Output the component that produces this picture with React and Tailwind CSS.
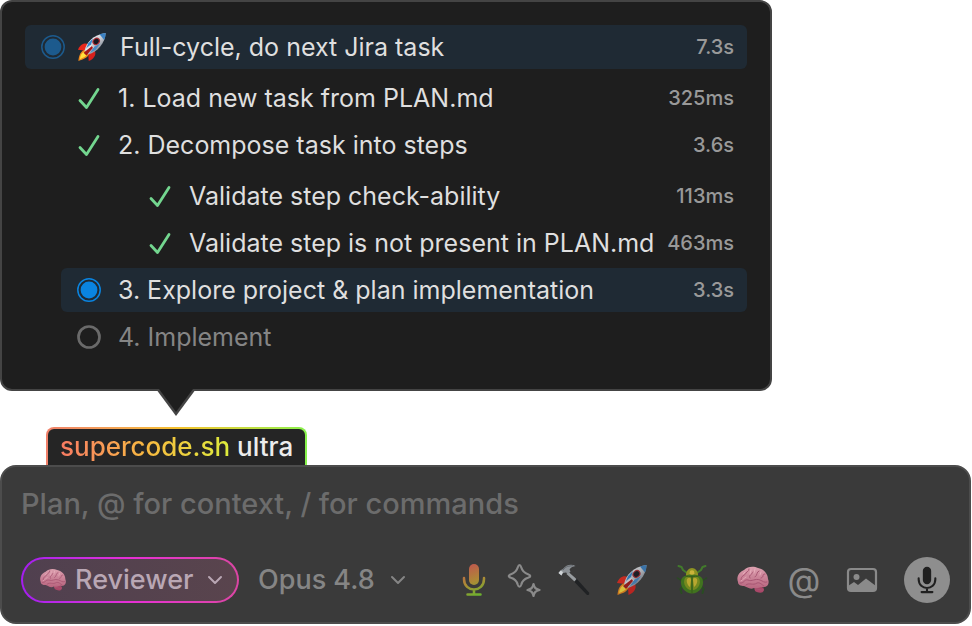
import { useId } from 'react';

function Rocket({ className }) {
  const id = useId();
  return (
    <svg viewBox="0 0 32 32" className={className} aria-hidden="true">
      <defs>
        <linearGradient id={id} x1="0.25" y1="0.2" x2="0.75" y2="0.8">
          <stop offset="0" stopColor="#f4f7fa" />
          <stop offset="0.5" stopColor="#c4c9d0" />
          <stop offset="1" stopColor="#7c828d" />
        </linearGradient>
      </defs>
      <path d="M12 13 C7 11 3 14 1 19 L9 20 Z" fill="#e8281c" />
      <path d="M19 20 C21 24 18 29 12.500 31 L12 23 Z" fill="#d8201c" />
      <path d="M9 19 C4 20 2 25 1.500 31 C7 29 11 28 13 23 Z" fill="#f08a1c" />
      <path d="M8.500 20.500 C5 22 3.500 25 3 29 C7 27.500 9.500 26.500 11.500 23 Z" fill="#ffe23c" />
      <path d="M8 20 C10 11 17 3 30.500 1 C30 12 22 21 12 24 Z" fill={`url(#${id})`} />
      <path d="M24 2.500 C26 1.700 28.500 1.200 30.500 1 C30.500 4 30 6 29 8.500 Z" fill="#3b82c4" />
      <path d="M12 12 L17 7 L15 13 L10 17 Z" fill="#2f86cf" />
      <path d="M18 16 L25 12 L20 19 L14 22 Z" fill="#4a8ac6" />
      <path d="M9 19 L15 14 L18 16 L12 23 Z" fill="#e9eef3" />
      <path d="M7 22 L16 15 L17 17 L10 25 Z" fill="#a61818" />
      <ellipse cx="20.500" cy="10" rx="4.300" ry="3.600" transform="rotate(-40 20.500 10)" fill="#a52d36" />
      <ellipse cx="20.500" cy="10" rx="3" ry="2.500" transform="rotate(-40 20.500 10)" fill="#171923" />
    </svg>
  );
}

function Brain({ className }) {
  const id = useId();
  return (
    <svg viewBox="0 0 34 30" className={className} aria-hidden="true">
      <defs>
        <linearGradient id={id} x1="0" y1="0" x2="0" y2="1">
          <stop offset="0" stopColor="#dca0af" />
          <stop offset="1" stopColor="#b8657f" />
        </linearGradient>
      </defs>
      <path d="M18 21 C22 20 28 21 28 25 C27 29 22 28 19 26 Z" fill="#a94768" />
      <path
        d="M2 17 C0 12 3 7 8 5 C12 1 18 1 22 3 C28 4 32 9 32 14 C34 19 31 23 26 22 C23 22 22 24 18 23 C14 25 11 22 8 21 C5 21 2 20 2 17 Z"
        fill={`url(#${id})`}
      />
      <g fill="none" stroke="#a85673" strokeWidth="1" strokeLinecap="round">
        <path d="M5 15 C5 10 9 11 10 8 C11 6 13 7 13 4" />
        <path d="M4 18 C8 19 8 14 12 15 C16 17 19 13 24 15 C27 16 28 18 31 17" />
        <path d="M10 20 C13 17 17 21 21 18 C24 17 26 20 28 21" />
        <path d="M14 13 C12 10 16 10 17 7 M19 12 C22 10 20 7 23 6 M25 13 C29 12 25 9 29 9" />
        <path d="M19 24 C22 23 24 26 27 25" />
      </g>
      <g fill="none" stroke="#f0b5c3" strokeWidth="1" strokeLinecap="round" opacity="0.7">
        <path d="M7 9 L9 7 M14 9 L15 5 M18 8 L19 4 M24 10 L25 7 M5 16 C7 16 7 13 10 12" />
      </g>
    </svg>
  );
}

function Beetle({ className }) {
  return (
    <svg viewBox="0 0 32 32" className={className} aria-hidden="true">
      <g fill="none" strokeLinecap="round" strokeLinejoin="round">
        <path d="M11 9 L7 6 L5.500 3 L2.500 2 M21 9 L25 6 L26.500 3 L29.500 2" stroke="#427a2c" strokeWidth="2" />
        <path d="M8 15 L4.500 16 L1.500 14 M24 15 L27.500 16 L30.500 14" stroke="#294d22" strokeWidth="1.500" />
        <path d="M7 22 L4.500 25 L5.500 29 M25 22 L27.500 25 L26.500 29" stroke="#294d22" strokeWidth="2" />
      </g>
      <path d="M10 12 C9.500 7 13 4 16 4 C19 4 22.500 7 22 12 Z" fill="#8f9322" />
      <path d="M5.500 15 C8 9 24 9 26.500 15 C29 22 23 29.500 16 29.500 C9 29.500 3 22 5.500 15 Z" fill="#41731f" />
      <path d="M9 14 C12 11.500 15 12 15.500 14 L15 26 C11 26 6 20 9 14 Z" fill="#75891f" />
      <path d="M23 14 C20 11.500 17 12 16.500 14 L17 26 C21 26 26 20 23 14 Z" fill="#75891f" />
      <path d="M11 15 C13 13 15 13.500 15 16 L14 23 C12 22 10 18 11 15 Z M21 15 C19 13 17 13.500 17 16 L18 23 C20 22 22 18 21 15 Z" fill="#b8a730" />
      <path d="M14 7 C15 6 17 6 18 7 L18.500 10 C17 11 15 11 13.500 10 Z" fill="#cbb43a" />
      <path d="M16 12 V29 M9.500 12 C13 13 19 13 22.500 12" fill="none" stroke="#385b1b" strokeWidth="1" />
    </svg>
  );
}

function Hammer({ className }) {
  return (
    <svg viewBox="0 0 34 34" className={className} aria-hidden="true">
      <path d="M16.500 15 L19 15 L32 29.500 C33 31.500 31 33 29.500 31.500 L17.500 19 Z" fill="#202224" />
      <path d="M11 8.500 L19.500 16 L17.500 18.500 L9.500 11 Z" fill="#999da0" />
      <path d="M1.500 10 L4.500 12.500 L6 10 L9 9.500 L11 11 L13.500 8.500 L12.500 6.500 C14 4 16 3.500 18.500 3 C14 0.500 9 2 6 6 L4 7 Z" fill="#8b9095" />
      <path d="M1.500 10 L4.500 12.500 L6 9 L3.500 7.500 Z" fill="#d0d4d7" />
      <path d="M6 7 C9 3 12 3 16 2.700" stroke="#62676d" fill="none" />
    </svg>
  );
}

function Mic({ className, gradient }) {
  const id = useId();
  const paint = gradient ? `url(#${id})` : 'currentColor';
  return (
    <svg viewBox="0 0 24 36" className={className} aria-hidden="true">
      <defs>
        <linearGradient id={id} gradientUnits="userSpaceOnUse" x1="6" y1="4" x2="18" y2="34">
          <stop offset="0" stopColor="#bd5a4c" />
          <stop offset="0.5" stopColor="#ad8936" />
          <stop offset="1" stopColor="#68b52e" />
        </linearGradient>
      </defs>
      <rect x="7" y="2" width="10" height="21" rx="5" fill={paint} />
      <path
        d="M2 16 V17 C2 31 22 31 22 17 V16 M12 28 V32.500 M5.500 32.500 H18.500"
        fill="none"
        stroke={paint}
        strokeWidth="2.500"
        strokeLinecap="round"
      />
    </svg>
  );
}

function Sparkles({ className }) {
  return (
    <svg viewBox="0 0 34 34" className={className} fill="none" stroke="currentColor" strokeWidth="2.200" strokeLinejoin="round" aria-hidden="true">
      <path d="M12.500 2 C13.300 2 13.800 3 14.300 4.500 C15.500 8.500 17 10 21 11.200 C24 12.200 24 13.800 21 14.800 C17 16 15.500 17.500 14.300 21.500 C13.300 24.500 11.700 24.500 10.700 21.500 C9.500 17.500 8 16 4 14.800 C1 13.800 1 12.200 4 11.200 C8 10 9.500 8.500 10.700 4.500 C11.200 3 11.700 2 12.500 2 Z" />
      <path d="M26.500 21 C27.500 25 28.500 26 32.500 27 C28.500 28 27.500 29 26.500 33 C25.500 29 24.500 28 20.500 27 C24.500 26 25.500 25 26.500 21 Z" />
    </svg>
  );
}

function Picture({ className }) {
  return (
    <svg viewBox="0 0 32 26" className={className} aria-hidden="true">
      <rect x="2" y="2" width="28" height="22" rx="3" fill="none" stroke="currentColor" strokeWidth="2.200" />
      <circle cx="10.500" cy="10" r="3" fill="currentColor" />
      <path d="M2 19 L8 15 L12 18 L20 11.500 L30 19 V22 Q30 24 28 24 H4 Q2 24 2 22 Z" fill="currentColor" />
    </svg>
  );
}

function Chevron({ className }) {
  return (
    <svg viewBox="0 0 16 10" className={className} fill="none" stroke="currentColor" strokeWidth="2" strokeLinecap="round" strokeLinejoin="round" aria-hidden="true">
      <path d="M2 2 L8 8 L14 2" />
    </svg>
  );
}

function Status({ state }) {
  if (state === 'done') {
    return (
      <svg viewBox="0 0 24 24" className="size-6 shrink-0" role="img" aria-label="Done">
        <path d="M3 14.500 L9.500 21.500 L21 3.500" fill="none" stroke="#73d68f" strokeWidth="2.800" strokeLinecap="round" strokeLinejoin="round" />
      </svg>
    );
  }
  if (state === 'pending') {
    return (
      <svg viewBox="0 0 24 24" className="size-6 shrink-0" role="img" aria-label="Pending">
        <circle cx="12" cy="12" r="10.500" fill="none" stroke="#6a6a6a" strokeWidth="2.700" />
      </svg>
    );
  }
  const color = state === 'parent' ? '#1c5a8d' : '#0a84e0';
  return (
    <svg viewBox="0 0 24 24" className="size-6 shrink-0" role="img" aria-label="Running">
      <circle cx="12" cy="12" r="11.200" fill="none" stroke={color} strokeWidth="1.500" />
      <circle cx="12" cy="12" r="8.400" fill={color} />
    </svg>
  );
}

function Row({ state, label, time, icon }) {
  const active = state === 'parent' || state === 'running';
  return (
    <div className={`flex h-11 items-center rounded-md pl-4 pr-[13px] ${active ? 'bg-[#1f2a34]' : ''} ${state === 'pending' ? 'text-[#858585]' : 'text-[#dfdfdf]'}`}>
      <Status state={state} />
      {icon && <Rocket className="ml-3 size-[30px] shrink-0" />}
      <span className={`whitespace-nowrap text-[25px] leading-8 ${icon ? 'ml-[13px]' : 'ml-[17px]'}`}>{label}</span>
      {time && <span className="ml-auto text-[20px] font-medium leading-6 text-[#999999]">{time}</span>}
    </div>
  );
}

function Tool({ label, className, children }) {
  return (
    <button type="button" aria-label={label} className={`flex h-10 shrink-0 items-center justify-center ${className}`}>
      {children}
    </button>
  );
}

export default function App() {
  return (
    <main className="bg-white pr-px font-['Inter','Liberation_Sans',sans-serif]">
      <section className="w-full max-w-[772px] rounded-xl border-2 border-[#444444] bg-[#1e1e1e] pb-[30px] pl-[23px] pr-[23px] pt-[23px]">
        <Row state="parent" label="Full-cycle, do next Jira task" time="7.3s" icon />
        <ol className="ml-9 mt-[7px] flex flex-col gap-[3px]">
          <li><Row state="done" label="1. Load new task from PLAN.md" time="325ms" /></li>
          <li>
            <Row state="done" label="2. Decompose task into steps" time="3.6s" />
            <ul className="ml-[71px] mt-[7px] flex flex-col gap-[3px]">
              <li><Row state="done" label="Validate step check-ability" time="113ms" /></li>
              <li><Row state="done" label="Validate step is not present in PLAN.md" time="463ms" /></li>
            </ul>
          </li>
          <li><Row state="running" label="3. Explore project & plan implementation" time="3.3s" /></li>
          <li><Row state="pending" label="4. Implement" /></li>
        </ol>
      </section>

      <svg viewBox="0 0 40 27" className="-mt-0.5 ml-[156px] block h-[27px] w-10" aria-hidden="true">
        <path d="M0 0 H40 L20 27 Z" fill="#444444" />
        <path d="M3 0 H37 L20 23 Z" fill="#1e1e1e" />
      </svg>

      <div className="ml-[46px] mt-[11px] w-fit rounded-t-lg bg-linear-to-r from-[#f0806a] via-[#f5c02c] to-[#86f24c] px-0.5 pt-0.5">
        <div className="flex h-9 items-center rounded-t-md bg-[#252525] px-3 text-[26px] font-medium leading-8">
          <a href="#supercode" className="bg-linear-to-r from-[#f77a62] via-[#f8b840] to-[#dcec3c] bg-clip-text text-transparent">supercode.sh</a>
          <span className="whitespace-pre text-[#ececec]"> ultra</span>
        </div>
      </div>

      <form className="rounded-2xl border-2 border-[#4c4c4c] bg-[#3a3a3a] px-[19px] pb-[19px] pt-[17px]" onSubmit={(e) => e.preventDefault()}>
        <input
          type="text"
          aria-label="Message"
          placeholder="Plan, @ for context, / for commands"
          className="block h-10 w-full bg-transparent text-[29px] font-medium text-[#858585] outline-none placeholder:text-[#6c6c6c]"
        />
        <div className="mt-[33px] flex items-center">
          <div className="w-[218px] shrink-0 rounded-full bg-linear-to-r from-[#a41cf0] via-[#e62fd4] to-[#dc45a4] p-0.5">
            <div className="relative flex h-[42px] items-center rounded-full bg-linear-to-r from-[#50404f] to-[#59444d] pl-4 text-[#b9a7b4]">
              <Brain className="h-[26px] w-7 shrink-0" />
              <select aria-label="Mode" className="h-full w-full min-w-0 appearance-none bg-transparent pl-2 pt-px text-[27px] font-medium outline-none">
                <option>Reviewer</option>
              </select>
              <Chevron className="pointer-events-none absolute right-[14px] h-[10px] w-4" />
            </div>
          </div>
          <div className="relative ml-[19px] flex w-[148px] shrink-0 items-center text-[#858585]">
            <select aria-label="Model" className="h-[42px] w-full appearance-none bg-transparent pt-px text-[27px] font-medium outline-none">
              <option>Opus 4.8</option>
            </select>
            <Chevron className="pointer-events-none absolute right-0 h-[10px] w-4" />
          </div>
          <div className="ml-auto flex items-center gap-[18px]">
            <div className="flex items-center gap-7">
              <div className="flex items-center gap-4">
                <Tool label="Dictate" className="w-7"><Mic gradient className="h-9 w-6" /></Tool>
                <Tool label="Enhance" className="w-10 text-[#8a8a8a]"><Sparkles className="size-[34px]" /></Tool>
                <Tool label="Build" className="w-7"><Hammer className="size-[34px] shrink-0" /></Tool>
              </div>
              <Tool label="Launch" className="w-8"><Rocket className="size-8 opacity-80" /></Tool>
              <Tool label="Debug" className="w-8"><Beetle className="size-8" /></Tool>
              <Tool label="Think" className="w-[34px]"><Brain className="h-[30px] w-[34px]" /></Tool>
            </div>
            <div className="flex items-center gap-[26px]">
              <Tool label="Mention" className="w-8 text-[34px] leading-8 text-[#8a8a8a]">@</Tool>
              <Tool label="Attach image" className="w-8 text-[#8a8a8a]"><Picture className="h-[26px] w-8" /></Tool>
              <button type="button" aria-label="Voice input" className="flex size-[46px] shrink-0 items-center justify-center rounded-full bg-[#8e8e8e] text-[#202020]">
                <Mic className="h-[30px] w-5" />
              </button>
            </div>
          </div>
        </div>
      </form>
    </main>
  );
}
